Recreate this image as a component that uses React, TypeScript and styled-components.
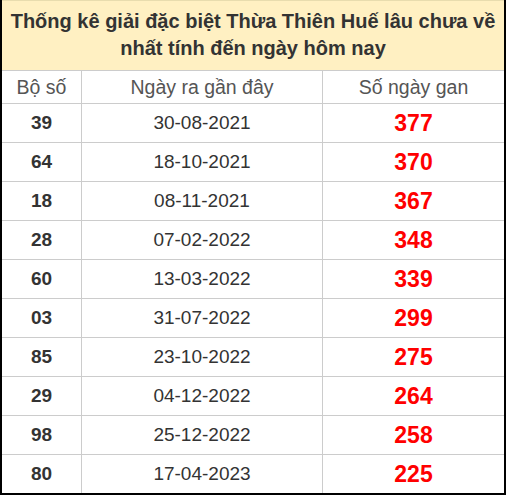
import React from "react"
import styled, { createGlobalStyle } from "styled-components"

const GlobalStyle = createGlobalStyle`
  html, body {
    margin: 0;
    padding: 0;
    background: #ffffff;
  }
  body {
    font-family: "Liberation Sans", Arial, sans-serif;
  }
`

const rows = [
  { num: "39", date: "30-08-2021", gan: "377" },
  { num: "64", date: "18-10-2021", gan: "370" },
  { num: "18", date: "08-11-2021", gan: "367" },
  { num: "28", date: "07-02-2022", gan: "348" },
  { num: "60", date: "13-03-2022", gan: "339" },
  { num: "03", date: "31-07-2022", gan: "299" },
  { num: "85", date: "23-10-2022", gan: "275" },
  { num: "29", date: "04-12-2022", gan: "264" },
  { num: "98", date: "25-12-2022", gan: "258" },
  { num: "80", date: "17-04-2023", gan: "225" },
]

const App = () => {
  return (
    <>
      <GlobalStyle />
      <Frame>
        <Title>
          Thống kê giải đặc biệt Thừa Thiên Huế lâu chưa về
          <br />
          nhất tính đến ngày hôm nay
        </Title>
        <HeadRow>
          <HeadCell>Bộ số</HeadCell>
          <HeadCell>Ngày ra gần đây</HeadCell>
          <HeadCell>Số ngày gan</HeadCell>
        </HeadRow>
        {rows.map((r) => (
          <BodyRow key={r.num}>
            <NumCell>{r.num}</NumCell>
            <DateCell>{r.date}</DateCell>
            <GanCell>{r.gan}</GanCell>
          </BodyRow>
        ))}
      </Frame>
    </>
  )
}

export default App

const Frame = styled.div`
  width: 506px;
  height: 495px;
  box-sizing: border-box;
  border-left: 2px solid #000;
  border-right: 2px solid #000;
  border-bottom: 2px solid #000;
  display: flex;
  flex-direction: column;
  background: #fff;
`

const Title = styled.div`
  height: 70px;
  box-sizing: border-box;
  border-top: 1px solid #e8dcae;
  background: #fff0c2;
  color: #333;
  font-weight: bold;
  font-size: 20px;
  line-height: 27px;
  text-align: center;
  padding-top: 7px;
`

const Row = styled.div`
  display: grid;
  grid-template-columns: 79px 241px 1fr;
  border-top: 1px solid #cccccc;
  box-sizing: border-box;
`

const HeadRow = styled(Row)`
  height: 33px;
`

const BodyRow = styled(Row)`
  height: 39px;
`

const Cell = styled.div`
  display: flex;
  align-items: center;
  justify-content: center;
  box-sizing: border-box;
  & + & {
    border-left: 1px solid #cccccc;
  }
`

const HeadCell = styled(Cell)`
  color: #555;
  font-size: 19.5px;
`

const NumCell = styled(Cell)`
  color: #333;
  font-weight: bold;
  font-size: 19px;
`

const DateCell = styled(Cell)`
  color: #333;
  font-size: 19px;
`

const GanCell = styled(Cell)`
  color: #ff0000;
  font-weight: bold;
  font-size: 23px;
`
